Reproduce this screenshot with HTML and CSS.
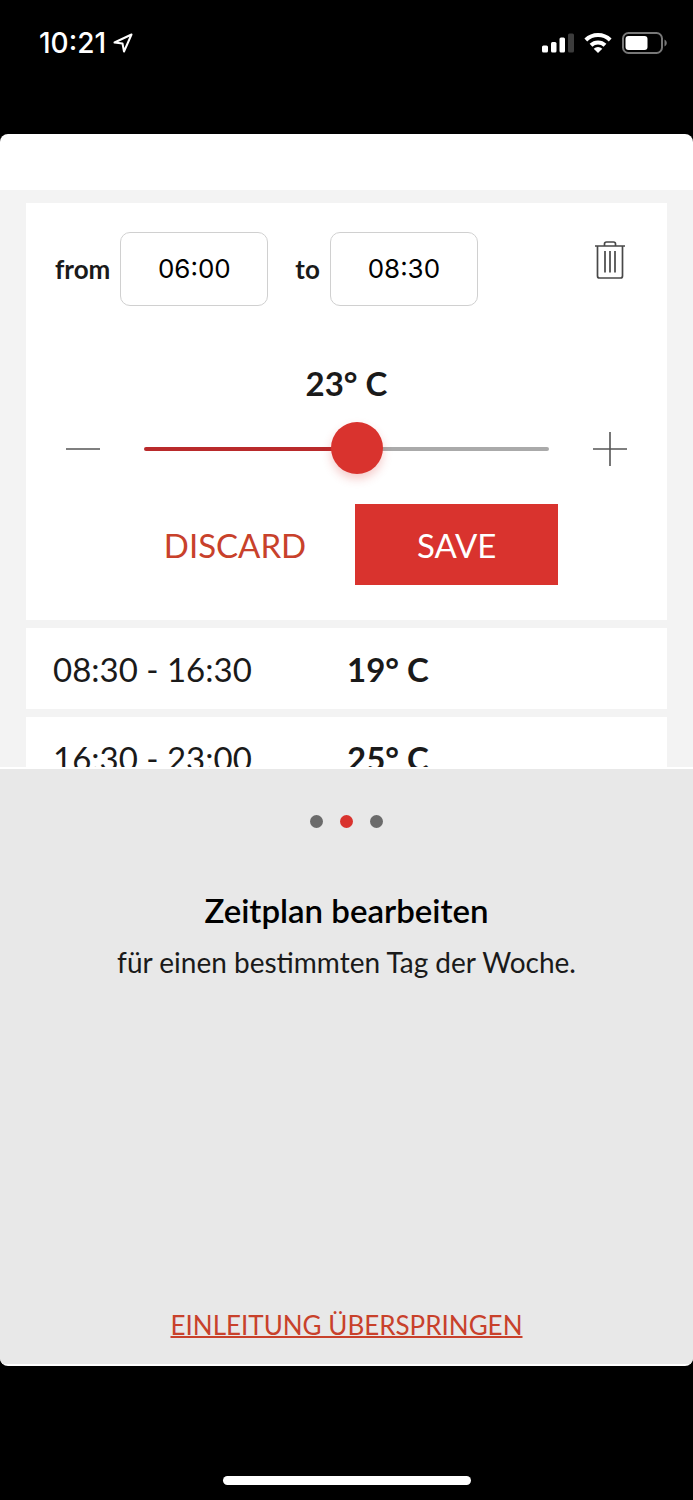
FILE: index.html
```
<!DOCTYPE html>
<html lang="de">
<head>
<meta charset="utf-8">
<meta name="viewport" content="width=device-width, initial-scale=1">
<title>Zeitplan bearbeiten</title>
<link rel="stylesheet" href="styles.css">
</head>
<body>
<div class="screen">
  <header class="status">
    <div class="status-time">
      <span>10:21</span>
      <svg width="20" height="20" viewBox="0 0 20 20" fill="none" stroke="#fff" stroke-width="2" stroke-linejoin="round"><path d="M18.500 1.500 1.500 9.500 9.500 10.500 11 18.500Z"/></svg>
    </div>
    <div class="status-icons">
      <svg width="32" height="20" viewBox="0 0 32 20" fill="#fff"><rect x="0" y="12.500" width="6" height="7" rx="1.500"/><rect x="9" y="9" width="5.500" height="10.500" rx="1.500"/><rect x="17.500" y="4.500" width="5.500" height="15" rx="1.500"/><rect x="26" y="0.500" width="6" height="19" rx="1.500" fill="#3c3c3c"/></svg>
      <svg width="28" height="22" viewBox="0 0 28 22" fill="none" stroke="#fff" stroke-width="4"><path d="M1.800 8A17.500 17.500 0 0 1 26.200 8"/><path d="M7 13.300A10 10 0 0 1 21 13.300"/><path d="M14 21 9.700 16.700A6 6 0 0 1 18.300 16.700Z" fill="#fff" stroke="none"/></svg>
      <svg width="45" height="22" viewBox="0 0 45 22"><rect x="1" y="1" width="39" height="20" rx="5.500" fill="none" stroke="#777" stroke-width="2"/><rect x="3.500" y="4" width="22" height="14" rx="3" fill="#fff"/><path d="M42.500 7.500C45.500 9 45.500 13 42.500 14.500Z" fill="#777"/></svg>
    </div>
  </header>

  <main class="sheet">
    <div class="sheet-top"></div>
    <section class="schedule">
      <form class="card editor">
        <div class="times">
          <label for="from">from</label>
          <input class="time" id="from" type="text" value="06:00">
          <label class="label-to" for="to">to</label>
          <input class="time" id="to" type="text" value="08:30">
          <button class="icon-button trash" type="button" aria-label="Delete">
            <svg width="30" height="40" viewBox="0 0 30 40" fill="none" stroke="#484848" stroke-width="1.700"><path d="M0 6H30M2.500 6V36Q2.500 38 4.500 38H25.500Q27.500 38 27.500 36V6M9.500 6V4Q9.500 2 11.500 2H18.500Q20.500 2 20.500 4V6M10 11V32.500M15 11V32.500M20 11V32.500"/></svg>
          </button>
        </div>
        <output class="temperature" for="degrees">23° C</output>
        <div class="slider-row">
          <button class="icon-button" type="button" aria-label="Decrease">
            <svg width="34" height="34" viewBox="0 0 34 34" stroke="#555" stroke-width="1.600"><path d="M0 17H34"/></svg>
          </button>
          <input class="slider" id="degrees" type="range" min="5" max="39" value="23" aria-label="Temperature">
          <button class="icon-button" type="button" aria-label="Increase">
            <svg width="34" height="34" viewBox="0 0 34 34" stroke="#555" stroke-width="1.600"><path d="M0 17H34M17 0V34"/></svg>
          </button>
        </div>
        <div class="actions">
          <button class="action discard" type="button">DISCARD</button>
          <button class="action save" type="button">SAVE</button>
        </div>
      </form>
      <div class="card slot"><span>08:30 - 16:30</span><strong>19° C</strong></div>
      <div class="card slot"><span>16:30 - 23:00</span><strong>25° C</strong></div>
    </section>

    <section class="intro">
      <div class="dots"><span class="dot"></span><span class="dot dot-active"></span><span class="dot"></span></div>
      <h1>Zeitplan bearbeiten</h1>
      <p>für einen bestimmten Tag der Woche.</p>
      <a class="skip" href="#">EINLEITUNG ÜBERSPRINGEN</a>
    </section>
  </main>

  <footer class="home"><div class="home-bar"></div></footer>
</div>
</body>
</html>
```
FILE: styles.css
```
* { box-sizing: border-box; }

body {
  margin: 0;
  background: #000;
  color: #1a1a1a;
  font-family: Lato, "Liberation Sans", sans-serif;
}

button {
  padding: 0;
  border: 0;
  background: none;
  font: inherit;
  cursor: pointer;
}

svg { display: block; }

.screen {
  display: flex;
  flex-direction: column;
  min-height: 100vh;
}

.status {
  display: flex;
  justify-content: space-between;
  align-items: flex-start;
  padding: 27px 26px 75px 39px;
  color: #fff;
}

.status-time {
  display: flex;
  align-items: center;
  gap: 7px;
  font: 500 28px/32px Inter, sans-serif;
}

.status-icons {
  display: flex;
  align-items: center;
  gap: 10px;
  height: 32px;
}

.sheet {
  display: flex;
  flex: 1;
  flex-direction: column;
  overflow: hidden;
  border-radius: 8px;
  background: #fff;
}

.sheet-top { height: 56px; }

.schedule {
  display: flex;
  flex-direction: column;
  gap: 8px;
  height: 577px;
  padding: 13px 26px 0;
  overflow: hidden;
  background: #f3f3f3;
}

.card {
  flex: none;
  background: #fff;
}

.editor {
  display: flex;
  flex-direction: column;
  padding: 29px 40px 35px 29px;
}

.times {
  display: flex;
  align-items: center;
  font-size: 26px;
  font-weight: 700;
}

.time {
  width: 148px;
  height: 74px;
  margin-left: 10px;
  padding: 0 0 2px;
  border: 1px solid #d0d0d0;
  border-radius: 10px;
  background: #fff;
  color: #000;
  font: 400 26px Inter, sans-serif;
  text-align: center;
}

.label-to { margin-left: 27px; }

.trash {
  align-self: flex-start;
  margin: 8px 2px 0 auto;
}

.temperature {
  margin-top: 56px;
  padding-left: 11px;
  font-size: 33px;
  font-weight: 700;
  line-height: 42px;
  text-align: center;
}

.slider-row {
  display: flex;
  align-items: center;
  gap: 44px;
  margin-top: 19px;
  padding-left: 11px;
}

.slider {
  flex: 1;
  min-width: 0;
  height: 52px;
  margin: 0;
  appearance: none;
  background: none;
}

.slider::-webkit-slider-runnable-track {
  height: 4px;
  border-radius: 2px;
  background: linear-gradient(to right, #b92a2b 53%, #aaa 53%);
}

.slider::-webkit-slider-thumb {
  width: 52px;
  height: 52px;
  margin-top: -25px;
  appearance: none;
  border-radius: 50%;
  background: #d9332e;
  box-shadow: 0 5px 10px rgba(217, 51, 46, 0.25);
}

.actions {
  display: flex;
  justify-content: center;
  gap: 49px;
  margin-top: 29px;
  padding-left: 40px;
}

.action {
  height: 81px;
  padding-top: 1px;
  font-size: 33px;
}

.discard { color: #c8412b; }

.save {
  width: 203px;
  background: #d9332e;
  color: #fff;
}

.slot {
  display: grid;
  grid-template-columns: 294px 1fr;
  align-items: center;
  height: 81px;
  padding: 1px 27px 0;
  font-size: 33px;
}

.intro {
  display: flex;
  flex: 1;
  flex-direction: column;
  align-items: center;
  margin: 2px 0;
  padding: 46px 20px 23px;
  background: #e8e8e8;
  text-align: center;
}

.dots {
  display: flex;
  gap: 17px;
}

.dot {
  width: 13px;
  height: 13px;
  border-radius: 50%;
  background: #6b6b6b;
}

.dot-active { background: #d9332e; }

.intro h1 {
  margin: 61px 0 0;
  color: #000;
  font-size: 33px;
  font-weight: 600;
  line-height: 42px;
}

.intro p {
  margin: 13px 0 0;
  font-size: 28px;
  line-height: 36px;
}

.skip {
  margin-top: auto;
  color: #c8412b;
  font-size: 26px;
  line-height: 32px;
  text-decoration-thickness: 2px;
}

.home {
  display: flex;
  justify-content: center;
  padding: 110px 0 15px;
}

.home-bar {
  width: 248px;
  height: 9px;
  border-radius: 5px;
  background: #fff;
}
```
